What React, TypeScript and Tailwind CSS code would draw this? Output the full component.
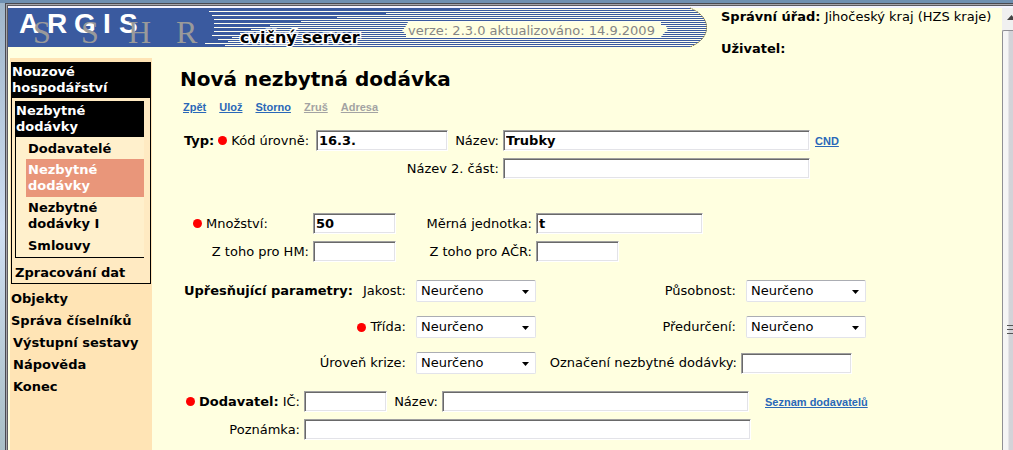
import React, { useId } from "react";

const BOX =
  "h-[21px] shrink-0 border border-t-[#a0a0a0] border-l-[#a0a0a0] border-r-white border-b-white bg-white px-[2px] text-[13px] font-bold text-black shadow-[inset_1px_1px_0_#696969,inset_-1px_-1px_0_#e3e3e8] outline-none";

function Dot() {
  return <span className="mx-1 inline-block size-[9px] shrink-0 rounded-full bg-[#ff0000]" />;
}

type FieldProps = {
  label: string;
  labelClass: string;
  inputClass: string;
  lead?: React.ReactNode;
  value?: string;
};

function Field({ label, labelClass, inputClass, lead, value = "" }: FieldProps) {
  const id = useId();
  return (
    <>
      <div className={`flex shrink-0 items-center pr-1 ${labelClass}`}>
        {lead}
        <label htmlFor={id}>{label}</label>
      </div>
      <input id={id} type="text" defaultValue={value} className={`${BOX} ${inputClass}`} />
    </>
  );
}

function SelectField({ label, labelClass, lead }: { label: string; labelClass: string; lead?: React.ReactNode }) {
  const id = useId();
  return (
    <>
      <div className={`flex shrink-0 items-center pr-[10px] ${labelClass}`}>
        {lead}
        <label htmlFor={id}>{label}</label>
      </div>
      <div className="relative w-[120px] shrink-0">
        <select
          id={id}
          className="block h-[22px] w-full appearance-none rounded-xs border border-[#e2e3ea] border-t-[#abadb3] bg-white px-1 text-[13px] text-black outline-none"
        >
          <option>Neurčeno</option>
        </select>
        <svg className="pointer-events-none absolute top-[10px] right-[7px]" width="7" height="4" viewBox="0 0 7 4">
          <path d="M0 0h7L3.5 4z" fill="#000" />
        </svg>
      </div>
    </>
  );
}

const SHORT_LINES = [
  [11, 209], [15, 212], [19, 214], [23, 214], [27, 214], [31, 214], [35, 212], [39, 218], [43, 205],
];
const LONG_LINES = [
  [9, 460], [13, 386], [17, 337], [21, 301], [25, 270], [29, 251], [33, 240], [37, 232], [41, 228], [45, 225],
];

function Banner() {
  return (
    <div className="relative h-[39px] w-[699px] shrink-0">
      <svg className="block overflow-visible" width="699" height="39" viewBox="8 8 699 39">
        <defs>
          <clipPath id="banner-shape">
            <path d="M8 8H690C700 12 707 19 707 27.500S700 43 690 47H8z" />
          </clipPath>
        </defs>
        <g clipPath="url(#banner-shape)">
          <rect x="8" y="8" width="699" height="39" fill="#3a5a9f" />
          {[...SHORT_LINES, ...LONG_LINES].map(([y, x]) => (
            <rect key={y} x={x} y={y} width={707 - x} height="1" fill="#fffff0" />
          ))}
          <path d="M408 22H661V26H666L668 30L664 33L661 37H406V34L402 31L406 26z" fill="#ffffe0" />
        </g>
        <path
          d="M690 8C700 12 706.500 19 706.500 27.500S700 43 690 47"
          fill="none"
          stroke="#8a7420"
          strokeWidth="1"
          strokeDasharray="1 1"
        />
        <text y="33" x="19 47 74 103 119" fontFamily="Liberation Sans, sans-serif" fontWeight="bold" fontSize="28" fill="#fff">
          ARGIS
        </text>
        <text y="43" x="33 81 128 176" fontFamily="Liberation Serif, serif" fontSize="32" fill="#9a9a9a">
          SSHR
        </text>
        <text
          x="240"
          y="43"
          fontFamily="DejaVu Sans, sans-serif"
          fontWeight="bold"
          fontSize="16"
          fill="#000"
          stroke="#fff"
          strokeWidth="3"
          paintOrder="stroke"
        >
          cvičný server
        </text>
      </svg>
      <p className="absolute top-[15px] left-[400px] text-[13px] leading-4 whitespace-nowrap text-[#858585]">
        verze: 2.3.0 aktualizováno: 14.9.2009
      </p>
    </div>
  );
}

function Sidebar() {
  return (
    <nav className="mt-[11px] ml-[2px] w-[142px] shrink-0 bg-[#ffe4b5] pt-1 pr-px pl-px text-[13px] leading-4 font-bold">
      <div className="border border-black bg-[#ffeac2]">
        <a href="#nouzove" className="block bg-black pt-px pb-[2px] text-white">
          Nouzové
          <br />
          hospodářství
        </a>
        <div className="mt-[3px] mr-[6px] ml-[3px] border-b border-l border-black bg-[#fff0cc]">
          <a href="#dodavky" className="block bg-black pt-[2px] pb-[2px] text-white">
            Nezbytné
            <br />
            dodávky
          </a>
          <div className="flex flex-col pl-[10px]">
            <a href="#dodavatele" className="px-[2px] pt-1 pb-[2px]">Dodavatelé</a>
            <a href="#nezbytne" className="bg-[#e9967a] px-[2px] py-[3px] text-white">
              Nezbytné
              <br />
              dodávky
            </a>
            <a href="#nezbytne1" className="px-[2px] py-[3px]">
              Nezbytné
              <br />
              dodávky I
            </a>
            <a href="#smlouvy" className="px-[2px] py-[3px]">Smlouvy</a>
          </div>
        </div>
        <a href="#zpracovani" className="block px-[3px] pt-[7px] pb-[2px]">Zpracování dat</a>
      </div>
      <div className="flex flex-col gap-[6px] pt-[7px]">
        <a href="#objekty">Objekty</a>
        <a href="#ciselniky" className="whitespace-nowrap">Správa číselníků</a>
        <a href="#sestavy" className="pl-[2px] whitespace-nowrap">Výstupní sestavy</a>
        <a href="#napoveda" className="pl-[2px]">Nápověda</a>
        <a href="#konec" className="pl-[2px]">Konec</a>
      </div>
    </nav>
  );
}

const LINK = "font-['Liberation_Sans',sans-serif] text-[11px] leading-4 font-bold underline";

export default function App() {
  return (
    <div className="flex h-screen flex-col overflow-hidden bg-[#ffffe0] font-['DejaVu_Sans',sans-serif] text-[13px] leading-4 text-black">
      <div className="h-[3px] shrink-0 bg-[#6f90b1]" />
      <div className="flex min-h-0 grow">
        <div className="w-[5px] shrink-0 bg-linear-to-b from-[#9fb6ca] via-[#cfdff2] to-[#a9bfc6]" />
        <div className="flex min-w-0 grow flex-col border-t border-l border-[#4a4a50]">
          <div className="h-px shrink-0 bg-[#a5a5ab]" />
          <div className="flex min-h-0 grow border-l border-[#a5a5ab]">
            <div className="flex min-w-0 grow flex-col border-t border-l border-[#5a5a60]">
              <div className="h-[2px] shrink-0 bg-[#f4f4ff]" />
              <div className="flex min-h-0 grow">
                <div className="flex min-w-0 grow flex-col">
                  <header className="flex h-[39px] shrink-0 items-start">
                    <Banner />
                    <div className="flex flex-col gap-4 pt-px pl-[14px] whitespace-nowrap">
                      <p>
                        <b>Správní úřad:</b> Jihočeský kraj (HZS kraje)
                      </p>
                      <p className="font-bold">Uživatel:</p>
                    </div>
                  </header>
                  <div className="flex min-h-0 grow">
                    <div className="flex">
                      <Sidebar />
                    </div>
                    <main className="min-w-0 grow pt-5 pl-7">
                      <h1 className="text-[20px] leading-6 font-bold">Nová nezbytná dodávka</h1>
                      <div className="mt-2 flex gap-[13px] pl-[3px] text-[#2a68b8]">
                        <a href="#zpet" className={LINK}>Zpět</a>
                        <a href="#uloz" className={LINK}>Ulož</a>
                        <a href="#storno" className={LINK}>Storno</a>
                        <a href="#zrus" className={`${LINK} text-[#a3a3a3]`}>Zruš</a>
                        <a href="#adresa" className={`${LINK} text-[#a3a3a3]`}>Adresa</a>
                      </div>
                      <form className="mt-[15px] flex flex-col pl-1">
                        <section className="flex flex-col gap-[7px]">
                          <div className="flex items-center">
                            <Field
                              label="Kód úrovně:"
                              labelClass="w-[132px] whitespace-nowrap"
                              inputClass="w-[132px]"
                              value="16.3."
                              lead={<><b>Typ:</b><Dot /></>}
                            />
                            <Field label="Název:" labelClass="w-[55px] justify-end" inputClass="w-[307px]" value="Trubky" />
                            <a href="#cnd" className={`${LINK} ml-[5px] text-[#2a68b8]`}>CND</a>
                          </div>
                          <div className="flex items-center">
                            <Field label="Název 2. část:" labelClass="w-[319px] justify-end" inputClass="w-[307px]" />
                          </div>
                        </section>
                        <section className="mt-[34px] flex flex-col gap-[7px]">
                          <div className="flex items-center">
                            <Field label="Množství:" labelClass="w-[129px] pl-[5px]" inputClass="w-[83px]" value="50" lead={<Dot />} />
                            <Field label="Měrná jednotka:" labelClass="w-[140px] justify-end" inputClass="w-[167px]" value="t" />
                          </div>
                          <div className="flex items-center">
                            <Field label="Z toho pro HM:" labelClass="w-[129px] justify-end" inputClass="w-[83px]" />
                            <Field label="Z toho pro AČR:" labelClass="w-[140px] justify-end" inputClass="w-[83px]" />
                          </div>
                        </section>
                        <section className="mt-[18px] flex flex-col gap-[14px]">
                          <div className="flex items-center">
                            <SelectField
                              label="Jakost:"
                              labelClass="w-[232px] justify-between whitespace-nowrap"
                              lead={<b>Upřesňující parametry:</b>}
                            />
                            <SelectField label="Působnost:" labelClass="w-[210px] justify-end" />
                          </div>
                          <div className="flex items-center">
                            <SelectField label="Třída:" labelClass="w-[232px] justify-end" lead={<Dot />} />
                            <SelectField label="Předurčení:" labelClass="w-[210px] justify-end" />
                          </div>
                          <div className="flex items-center">
                            <SelectField label="Úroveň krize:" labelClass="w-[232px] justify-end" />
                            <Field label="Označení nezbytné dodávky:" labelClass="w-[205px] justify-end whitespace-nowrap" inputClass="w-[111px]" />
                          </div>
                        </section>
                        <section className="mt-[17px] flex flex-col gap-[7px]">
                          <div className="flex items-center">
                            <Field
                              label="IČ:"
                              labelClass="w-[120px] justify-end whitespace-nowrap"
                              inputClass="w-[83px]"
                              lead={<><Dot /><b className="mr-1">Dodavatel:</b></>}
                            />
                            <Field label="Název:" labelClass="w-[55px] justify-end" inputClass="w-[307px]" />
                            <a href="#seznam" className={`${LINK} ml-4 text-[#2a68b8]`}>Seznam dodavatelů</a>
                          </div>
                          <div className="flex items-center">
                            <Field label="Poznámka:" labelClass="w-[120px] justify-end" inputClass="w-[447px]" />
                          </div>
                        </section>
                      </form>
                    </main>
                  </div>
                </div>
                <div className="flex w-[11px] shrink-0 flex-col overflow-hidden bg-[#f0f0f0]">
                  <svg className="block h-[22px] w-[11px] shrink-0" viewBox="0 0 11 22">
                    <path d="M5 12L9.500 7L14 12z" fill="#444" />
                  </svg>
                  <div className="flex grow items-center rounded-tl-xs border-t border-l border-[#8f8f94] bg-linear-to-r from-[#f5f5f5] from-50% to-[#d3d3d8] to-60%">
                    <svg className="mt-[180px] ml-1 block" width="6" height="11" viewBox="0 0 6 11">
                      <path d="M0 .5h6M0 4.500h6M0 8.500h6" stroke="#555" />
                    </svg>
                  </div>
                </div>
              </div>
            </div>
          </div>
        </div>
      </div>
    </div>
  );
}
